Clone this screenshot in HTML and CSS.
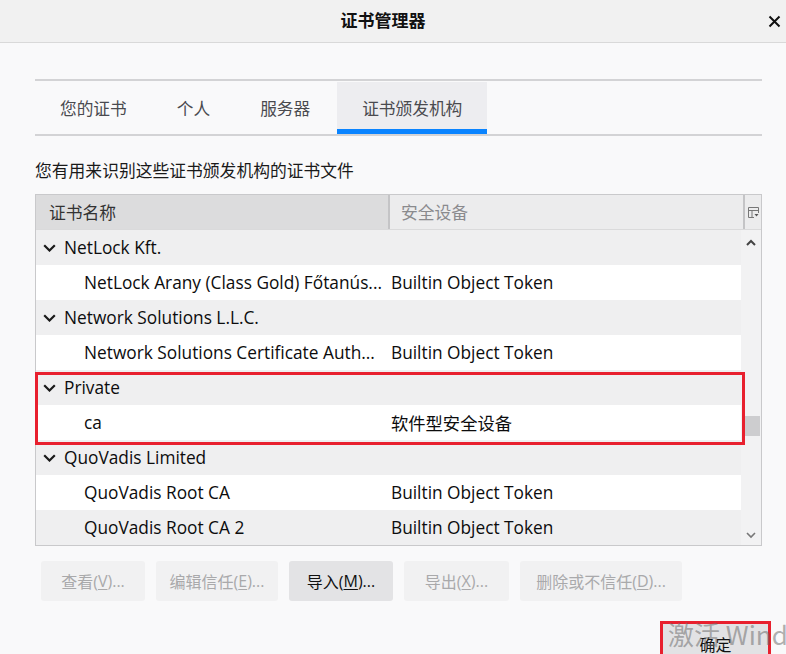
FILE: index.html
```html
<!DOCTYPE html>
<html lang="zh-CN">
<head>
<meta charset="utf-8">
<title>证书管理器</title>
<link rel="stylesheet" href="styles.css">
</head>
<body>
<div class="titlebar">
  <div></div>
  <div class="title">证书管理器</div>
  <div class="close"><svg width="13" height="13" viewBox="0 0 13 13"><path d="M1.5 1.5 L11.5 11.5 M11.5 1.5 L1.5 11.5" stroke="#111" stroke-width="2" fill="none"/></svg></div>
</div>
<div class="main">
  <div class="tabs">
    <div class="tab">您的证书</div>
    <div class="tab">个人</div>
    <div class="tab">服务器</div>
    <div class="tab active">证书颁发机构</div>
  </div>
  <div class="desc">您有用来识别这些证书颁发机构的证书文件</div>
  <div class="table">
    <div class="thead">
      <div class="th th-name">证书名称</div>
      <div class="th th-dev">安全设备</div>
      <div class="th-pick"><svg width="11" height="11" viewBox="0 0 11 11"><path d="M0.5 0.5 H10.5 V6 M0.5 0.5 V10.5 H6 M0.5 3.5 H10.5 M4 3.5 V10.5" stroke="#777" stroke-width="1" fill="none"/><path d="M6.5 7 H10.5 L8.5 9.5 Z" fill="#555"/></svg></div>
    </div>
    <div class="tbody">
      <div class="rows">
        <div class="row group"><span class="chev"><svg width="13" height="8" viewBox="0 0 13 8"><path d="M1.2 1.2 L6.5 6.5 L11.8 1.2" stroke="#1a1a1a" stroke-width="2.2" fill="none"/></svg></span><span class="name">NetLock Kft.</span></div>
        <div class="row child"><span class="name">NetLock Arany (Class Gold) Főtanús...</span><span class="dev">Builtin Object Token</span></div>
        <div class="row group"><span class="chev"><svg width="13" height="8" viewBox="0 0 13 8"><path d="M1.2 1.2 L6.5 6.5 L11.8 1.2" stroke="#1a1a1a" stroke-width="2.2" fill="none"/></svg></span><span class="name">Network Solutions L.L.C.</span></div>
        <div class="row child"><span class="name">Network Solutions Certificate Auth...</span><span class="dev">Builtin Object Token</span></div>
        <div class="row group"><span class="chev"><svg width="13" height="8" viewBox="0 0 13 8"><path d="M1.2 1.2 L6.5 6.5 L11.8 1.2" stroke="#1a1a1a" stroke-width="2.2" fill="none"/></svg></span><span class="name">Private</span></div>
        <div class="row child"><span class="name">ca</span><span class="dev">软件型安全设备</span></div>
        <div class="row group"><span class="chev"><svg width="13" height="8" viewBox="0 0 13 8"><path d="M1.2 1.2 L6.5 6.5 L11.8 1.2" stroke="#1a1a1a" stroke-width="2.2" fill="none"/></svg></span><span class="name">QuoVadis Limited</span></div>
        <div class="row child"><span class="name">QuoVadis Root CA</span><span class="dev">Builtin Object Token</span></div>
        <div class="row child"><span class="name">QuoVadis Root CA 2</span><span class="dev">Builtin Object Token</span></div>
      </div>
      <div class="scrollbar">
        <svg class="sb-up" width="10" height="7" viewBox="0 0 10 7"><path d="M1 6 L5 2 L9 6" stroke="#444" stroke-width="2" fill="none"/></svg>
        <div class="sb-track"><div class="sb-thumb"></div></div>
        <svg class="sb-down" width="10" height="7" viewBox="0 0 10 7"><path d="M1 1 L5 5 L9 1" stroke="#777" stroke-width="1.6" fill="none"/></svg>
      </div>
    </div>
    <div class="highlight"></div>
  </div>
  <div class="buttons">
    <div class="btn b-view">查看(<u>V</u>)...</div>
    <div class="btn b-edit">编辑信任(<u>E</u>)...</div>
    <div class="btn b-import enabled">导入(<u>M</u>)...</div>
    <div class="btn b-export">导出(<u>X</u>)...</div>
    <div class="btn b-del">删除或不信任(<u>D</u>)...</div>
  </div>
</div>
<div class="footer">
  <div class="ok">确定</div>
</div>
<div class="watermark">激活 Wind</div>
</body>
</html>
```

FILE: styles.css
```css
* { box-sizing: border-box; }
html, body { margin: 0; padding: 0; }
body {
  width: 786px;
  height: 654px;
  overflow: hidden;
  position: relative;
  background: #f9f9fa;
  font-family: "Open Sans", "Noto Sans CJK SC", sans-serif;
  color: #0c0c0d;
}

.titlebar {
  height: 43px;
  background: #f1f1f1;
  border-bottom: 1px solid #d9d9d9;
  display: grid;
  grid-template-columns: 1fr auto 1fr;
  align-items: center;
  padding-right: 5px;
}
.title {
  font-size: 17px;
  font-weight: 700;
  line-height: 20px;
  margin-right: 15px;
  color: #111;
}
.close {
  justify-self: end;
  display: flex;
  align-items: center;
}

.main {
  padding: 36px 24px 0 35px;
}

.tabs {
  display: flex;
  height: 57px;
  border-top: 2px solid #d3d3d5;
  border-bottom: 2px solid #d3d3d5;
}
.tab {
  padding: 0 25px;
  display: flex;
  align-items: center;
  font-size: 16.7px;
  color: #4a4a4f;
}
.tab.active {
  background: #ededf0;
  box-shadow: inset 0 -5px 0 #0a84ff;
  margin-top: 1px;
  margin-left: 2px;
}

.desc {
  margin-top: 25px;
  font-size: 16.8px;
  line-height: 20px;
  color: #1a1a1a;
}

.table {
  margin-top: 13px;
  border: 1px solid #c9c9cb;
  background: #fff;
  position: relative;
}
.thead {
  display: grid;
  grid-template-columns: 354px 1fr 16px;
  height: 35px;
  background: #ececed;
  border-bottom: 1px solid #dadadb;
}
.th {
  display: flex;
  align-items: center;
  font-size: 16.8px;
  padding-left: 13px;
}
.th-name {
  background: #dcdcdd;
  color: #333;
  border-right: 2px solid #c4c4c6;
}
.th-dev {
  color: #8a8a8d;
  padding-left: 11px;
  border-right: 2px solid #c4c4c6;
}
.th-pick {
  display: flex;
  align-items: center;
  justify-content: center;
  padding-left: 1px;
}

.tbody {
  display: flex;
  height: 315px;
}
.rows {
  width: 705px;
  display: flex;
  flex-direction: column;
}
.row {
  height: 35px;
  display: flex;
  align-items: center;
  font-size: 17.3px;
  white-space: nowrap;
  overflow: hidden;
}
.row:nth-child(odd) { background: #efeff0; }
.row:nth-child(even) { background: #fff; }
.row.group { padding-left: 7px; }
.row.child { padding-left: 48px; }
.chev {
  width: 21px;
  display: flex;
  align-items: center;
}
.row.child .name {
  width: 307px;
  flex: none;
  overflow: hidden;
}
.dev { color: #0c0c0d; }

.scrollbar {
  width: 20px;
  background: #f2f2f3;
  display: flex;
  flex-direction: column;
  align-items: center;
  padding: 9px 0 6px;
}
.sb-track {
  flex: 1;
  width: 100%;
  padding-top: 170px;
}
.sb-thumb {
  height: 20px;
  margin-left: 3px;
  width: 16px;
  background: #cdcdcf;
}

.highlight {
  position: absolute;
  left: -1px;
  top: 177px;
  width: 710px;
  height: 73px;
  border: 3px solid #e8202e;
}

.buttons {
  display: flex;
  gap: 11px;
  margin-top: 15px;
  padding-left: 6px;
}
.btn {
  height: 40px;
  display: flex;
  align-items: center;
  justify-content: center;
  font-size: 16px;
  color: #a9a9ab;
  background: #f1f1f2;
  border-radius: 3px;
}
.btn u { text-underline-offset: 2px; }
.btn.enabled {
  background: #e3e3e5;
  color: #111;
}
.b-view { width: 104px; }
.b-edit { width: 122px; }
.b-import { width: 104px; }
.b-export { width: 105px; }
.b-del { width: 162px; }

.footer {
  margin-top: 20px;
  display: flex;
  justify-content: flex-end;
  padding-right: 15px;
}
.ok {
  width: 111px;
  height: 40px;
  border: 3px solid #e8202e;
  background: #e2e2e4;
  font-size: 16px;
  display: flex;
  justify-content: center;
  padding-top: 11px;
  line-height: 20px;
  color: #111;
}

.watermark {
  position: absolute;
  left: 668px;
  top: 617px;
  font-size: 26px;
  line-height: 34px;
  white-space: nowrap;
  color: rgba(110, 110, 110, 0.55);
  font-family: "Noto Sans CJK SC", sans-serif;
}
```
